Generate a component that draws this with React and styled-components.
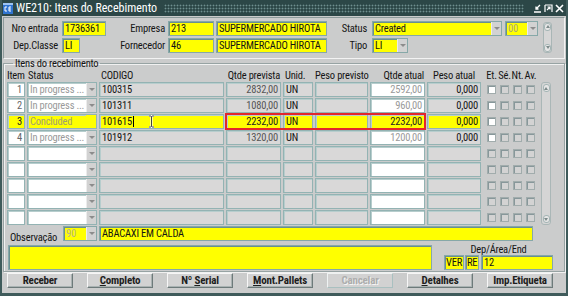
import React from "react";
import styled, { createGlobalStyle } from "styled-components";

const YELLOW = "#ffff00";
const GRAY = "#d9d8d8";
const WHITE = "#ffffff";
const FONT = `"Roboto Condensed", "Liberation Sans", Arial, sans-serif`;

const GlobalStyle = createGlobalStyle`
  * { box-sizing: border-box; }
  html, body { margin: 0; padding: 0; background: #c8caca; }
  body {
    font-family: ${FONT};
    font-size: 10.5px;
    letter-spacing: -0.2px;
    color: #151515;
  }
`;

const Window = styled.div`
  width: 568px;
  height: 296px;
  display: flex;
  flex-direction: column;
  background: #cbcccc;
  border: 2px solid #3f5b5b;
  border-top: none;
  border-bottom-width: 3px;
  overflow: hidden;
`;

const TitleBar = styled.div`
  height: 16px;
  flex: none;
  display: flex;
  align-items: center;
  gap: 3px;
  padding: 0 2px 0 1px;
  background: #2c4747;
  color: #fff;
  font-size: 12px;
  letter-spacing: 0;
`;

const Dots = styled.span`
  flex: 1;
  height: 9px;
  margin: 0 6px 0 4px;
  background-image: radial-gradient(circle, #6f8f8f 0.8px, transparent 1.1px);
  background-size: 3px 3px;
`;

const Controls = styled.div`
  display: flex;
  gap: 2px;
`;

const HeaderPanel = styled.div`
  flex: none;
  margin: 1px 1px 0;
  height: 42px;
  padding-top: 3px;
  border: 1px solid #8d9b9b;
  border-right-color: #f3f3f3;
  border-bottom-color: #f3f3f3;
  display: grid;
  grid-template-columns: 58px 44px 62px 46px 113px 45px 130px 36px 14px;
  grid-template-rows: 15px 15px;
  row-gap: 2px;
  align-items: center;
`;

const Label = styled.span`
  text-align: right;
  padding-right: ${(p) => p.$pr ?? 4}px;
  white-space: nowrap;
  line-height: 15px;
`;

const Field = styled.div`
  height: 15px;
  width: ${(p) => (p.$w ? `${p.$w}px` : "auto")};
  margin-left: ${(p) => p.$ml || 0}px;
  display: flex;
  align-items: center;
  justify-content: ${(p) => (p.$right ? "flex-end" : "flex-start")};
  padding: 0 ${(p) => p.$pad ?? 2}px;
  background: ${(p) => p.$bg || YELLOW};
  color: ${(p) => p.$tone || "#141414"};
  border: 1px solid #86a8a8;
  box-shadow: inset 1px 1px 0 #6a8f8f;
  white-space: nowrap;
  overflow: hidden;
  min-width: 0;
`;

const Cell = styled(Field)`
  border-color: #93b3b3;
  box-shadow: inset 1px 1px 0 #b7cdcd;
`;

const ComboText = styled.span`
  flex: 1;
  padding: 0 2px;
  overflow: hidden;
`;

const DropBtn = styled.span`
  width: 10px;
  align-self: stretch;
  flex: none;
  display: flex;
  align-items: center;
  justify-content: center;
  background: ${(p) => p.$bg || "#d2d2d2"};
  border-left: 1px solid ${(p) => (p.$bg ? p.$bg : "#ececec")};
  &::after {
    content: "";
    border-left: 3px solid transparent;
    border-right: 3px solid transparent;
    border-top: 3px solid ${(p) => (p.$bg ? "transparent" : "#8c8c8c")};
  }
`;

const MiniScroll = styled.div`
  grid-column: 9;
  grid-row: 1 / span 2;
  margin-left: 5px;
  width: 9px;
  height: 31px;
  display: flex;
  flex-direction: column;
  justify-content: space-between;
  align-items: center;
  background: #d6d6d6;
  border: 1px solid #a9b6b6;
  border-radius: 3px;
`;

const ScrollBtn = styled.span`
  width: 7px;
  height: 8px;
  display: flex;
  align-items: center;
  justify-content: center;
  border-radius: 3px;
  background: #e6e6e6;
  border: 1px solid #a4b5b5;
  &::after {
    content: "";
    border-left: 2px solid transparent;
    border-right: 2px solid transparent;
    ${(p) =>
      p.$down ? "border-top: 3px solid #7d8b8b;" : "border-bottom: 3px solid #7d8b8b;"}
  }
`;

const Group = styled.fieldset`
  flex: none;
  margin: 0 1px;
  padding: 0 3px 1px;
  border: 1px solid #97a3a3;
  box-shadow: inset 1px 1px 0 #f1f1f1, 1px 1px 0 #f1f1f1;
  min-width: 0;
`;

const Legend = styled.legend`
  margin-left: 6px;
  padding: 0 2px;
  line-height: 9px;
  font-size: 10.5px;
`;

const ItemsGrid = styled.div`
  display: grid;
  grid-template-columns: 18px 70px 125px 199px 54px 56px 10px;
  grid-template-rows: 13px repeat(9, 15px);
  column-gap: 2px;
  row-gap: 1px;
`;

const Head = styled.span`
  align-self: end;
  white-space: nowrap;
  line-height: 10px;
  text-align: ${(p) => p.$align || "left"};
  padding: 0 ${(p) => p.$pad || 0}px;
`;

const Quad = styled.div`
  display: grid;
  grid-template-columns: 55px 30px 53px 55px;
  column-gap: 2px;
  outline: ${(p) => (p.$marked ? "2px solid #e3262b" : "none")};
  outline-offset: -1px;
`;

const CheckHeads = styled.div`
  align-self: end;
  display: flex;
  padding-left: 2px;
  line-height: 10px;
  span {
    width: 13px;
    text-align: center;
    white-space: nowrap;
  }
`;

const Checks = styled.div`
  display: flex;
  align-items: center;
  gap: 4px;
  padding-left: 4px;
`;

const Check = styled.span`
  width: 9px;
  height: 9px;
  background: ${(p) => (p.$on ? WHITE : "#d3d3d3")};
  border: 1px solid #a1acac;
  box-shadow: inset 1px 1px 0 #87979a;
`;

const VScroll = styled.div`
  grid-column: 7;
  grid-row: 2 / span 9;
  display: flex;
  flex-direction: column;
  justify-content: space-between;
  align-items: center;
  padding: 1px 0;
  background: #d5d5d5;
  border: 1px solid #aab7b7;
  border-radius: 3px;
`;

const Caret = styled.span`
  width: 1px;
  height: 11px;
  background: #000;
  margin-left: 1px;
`;

const ObsRow = styled.div`
  display: flex;
  align-items: flex-start;
  height: 15px;
  margin-top: 1px;
`;

const ObsLabel = styled.span`
  width: 56px;
  flex: none;
  padding: 6px 0 0 3px;
  line-height: 11px;
  white-space: nowrap;
`;

const BottomRow = styled.div`
  display: flex;
  align-items: flex-start;
  margin-top: 4px;
`;

const Notes = styled.div`
  width: 424px;
  height: 25px;
  margin-left: 1px;
  background: ${YELLOW};
  border: 1px solid #86a8a8;
  box-shadow: inset 1px 1px 0 #6a8f8f;
`;

const DepBox = styled.div`
  width: 109px;
  margin-left: 12px;
  display: flex;
  flex-direction: column;
  align-items: center;
`;

const DepLabel = styled.span`
  line-height: 10px;
  height: 10px;
  white-space: nowrap;
`;

const DepFields = styled.div`
  display: flex;
  width: 100%;
`;

const ButtonBar = styled.div`
  flex: none;
  display: flex;
  justify-content: space-between;
  margin-top: 1px;
  padding: 0 13px 0 5px;
`;

const Button = styled.button`
  width: 66px;
  height: 15px;
  padding: 0;
  font-family: ${FONT};
  font-size: 11px;
  font-weight: bold;
  letter-spacing: -0.2px;
  line-height: 13px;
  color: #1e1e1e;
  background: #d2d2d2;
  border: 1px solid;
  border-color: #f6f6f6 #6d7a7a #6d7a7a #f6f6f6;
  box-shadow: inset -1px -1px 0 #a9b2b2;
  u {
    text-decoration: underline;
  }
  &:disabled {
    color: #adadad;
    text-shadow: 1px 1px 0 #f4f4f4;
    border-color: #eef2f2 #a9c0c0 #a9c0c0 #eef2f2;
    box-shadow: none;
  }
`;

const FormIcon = () => (
  <svg width="10" height="11" viewBox="0 0 10 11">
    <rect x="0" y="0" width="10" height="11" fill="#2f74d0" />
    <rect x="0" y="0" width="10" height="2" fill="#9cc3f2" />
    <path d="M2 4h2M2 4v4h2M6 4h2M6 4v4h2M6 6h2" stroke="#fff" strokeWidth="1" fill="none" />
  </svg>
);

const MinIcon = () => (
  <svg width="9" height="9" viewBox="0 0 9 9">
    <path d="M1 8h7M7 1L3 5M3 2.5V5h2.5" stroke="#fff" strokeWidth="1.3" fill="none" />
  </svg>
);

const RestoreIcon = () => (
  <svg width="9" height="9" viewBox="0 0 9 9">
    <path d="M1 1h7v7M1 1v7M3 6l3-3M3.5 3H6v2.5" stroke="#fff" strokeWidth="1.2" fill="none" />
  </svg>
);

const CloseIcon = () => (
  <svg width="9" height="9" viewBox="0 0 9 9">
    <path d="M1 1l7 7M8 1L1 8" stroke="#fff" strokeWidth="1.6" />
  </svg>
);

const IBeam = () => (
  <svg width="7" height="13" viewBox="0 0 7 13" style={{ marginLeft: 14 }}>
    <path d="M1 1h2l.5.5.5-.5h2M3.5 1.5v10M1 12h2l.5-.5.5.5h2" stroke="#fff" strokeWidth="2.2" fill="none" />
    <path d="M1 1h2l.5.5.5-.5h2M3.5 1.5v10M1 12h2l.5-.5.5.5h2" stroke="#444" strokeWidth="1" fill="none" />
  </svg>
);

const MUTED = "#9a9a9a";

const rows = [
  { item: "1", status: "In progress ...", code: "100315", prev: "2832,00", unid: "UN", atual: "2592,00", peso: "0,000" },
  { item: "2", status: "In progress ...", code: "101311", prev: "1080,00", unid: "UN", atual: "960,00", peso: "0,000" },
  { item: "3", status: "Concluded", code: "101615", prev: "2232,00", unid: "UN", atual: "2232,00", peso: "0,000", current: true },
  { item: "4", status: "In progress ...", code: "101912", prev: "1320,00", unid: "UN", atual: "1200,00", peso: "0,000" },
  {}, {}, {}, {}, {},
];

function ItemRow({ row }) {
  const cur = row.current;
  const white = cur ? YELLOW : WHITE;
  const gray = cur ? YELLOW : GRAY;
  const filled = Boolean(row.item);
  return (
    <>
      <Cell $bg={white} $right $tone={cur ? "#222" : "#666"}>{row.item}</Cell>
      <Cell $bg={white} $pad={0} $tone={cur ? "#a0a070" : MUTED}>
        <ComboText>{row.status}</ComboText>
        <DropBtn $bg={cur ? YELLOW : undefined} />
      </Cell>
      <Cell $bg={gray}>
        {row.code}
        {cur && (
          <>
            <Caret />
            <IBeam />
          </>
        )}
      </Cell>
      <Quad $marked={cur}>
        <Cell $bg={gray} $right $tone={cur ? "#222" : "#555"}>{row.prev}</Cell>
        <Cell $bg={gray}>{row.unid}</Cell>
        <Cell $bg={gray} />
        <Cell $bg={white} $right $tone={cur ? "#222" : MUTED}>{row.atual}</Cell>
      </Quad>
      <Cell $bg={gray} $right>{row.peso}</Cell>
      <Checks>
        <Check $on={filled} />
        <Check />
        <Check />
        <Check />
      </Checks>
    </>
  );
}

export default function App() {
  return (
    <>
      <GlobalStyle />
      <Window>
        <TitleBar>
          <FormIcon />
          <span>WE210: Itens do Recebimento</span>
          <Dots />
          <Controls>
            <MinIcon />
            <RestoreIcon />
            <CloseIcon />
          </Controls>
        </TitleBar>

        <HeaderPanel>
          <Label>Nro entrada</Label>
          <Field>1736361</Field>
          <Label $pr={3}>Empresa</Label>
          <Field>213</Field>
          <Field $ml={2}>SUPERMERCADO HIROTA</Field>
          <Label $pr={5}>Status</Label>
          <Field $pad={0}>
            <ComboText>Created</ComboText>
            <DropBtn />
          </Field>
          <Field $ml={3} $pad={0} $tone="#a8a880">
            <ComboText>00</ComboText>
            <DropBtn />
          </Field>
          <MiniScroll>
            <ScrollBtn />
            <ScrollBtn $down />
          </MiniScroll>

          <Label>Dep.Classe</Label>
          <Field $w={18}>LI</Field>
          <Label $pr={3}>Fornecedor</Label>
          <Field>46</Field>
          <Field $ml={2}>SUPERMERCADO HIROTA</Field>
          <Label $pr={5}>Tipo</Label>
          <Field $w={36} $pad={0}>
            <ComboText>LI</ComboText>
            <DropBtn />
          </Field>
        </HeaderPanel>

        <Group>
          <Legend>Itens do recebimento</Legend>
          <ItemsGrid>
            <Head>Item</Head>
            <Head $pad={1}>Status</Head>
            <Head $pad={2}>CODIGO</Head>
            <Quad>
              <Head $align="right" $pad={1}>Qtde prevista</Head>
              <Head $pad={2}>Unid.</Head>
              <Head $align="center">Peso previsto</Head>
              <Head $align="right" $pad={1}>Qtde atual</Head>
            </Quad>
            <Head $align="center">Peso atual</Head>
            <CheckHeads>
              <span>Et.</span>
              <span>Sé.</span>
              <span>Nt.</span>
              <span>Av.</span>
            </CheckHeads>
            <span />
            <VScroll>
              <ScrollBtn />
              <ScrollBtn $down />
            </VScroll>
            {rows.map((row, i) => (
              <ItemRow key={i} row={row} />
            ))}
          </ItemsGrid>

          <ObsRow>
            <ObsLabel>Observação</ObsLabel>
            <Field $w={34} $pad={0} $tone="#b4b48a">
              <ComboText>90</ComboText>
              <DropBtn />
            </Field>
            <Field $w={434} $ml={2}>ABACAXI EM CALDA</Field>
          </ObsRow>

          <BottomRow>
            <Notes />
            <DepBox>
              <DepLabel>Dep/Área/End</DepLabel>
              <DepFields>
                <Field $w={20} $pad={1}>VER</Field>
                <Field $w={14} $ml={1} $pad={1}>RE</Field>
                <Field $w={72} $ml={2}>12</Field>
              </DepFields>
            </DepBox>
          </BottomRow>
        </Group>

        <ButtonBar>
          <Button>Receber</Button>
          <Button><u>C</u>ompleto</Button>
          <Button>Nº <u>S</u>erial</Button>
          <Button><u>M</u>ont.Pallets</Button>
          <Button disabled>Cancelar</Button>
          <Button><u>D</u>etalhes</Button>
          <Button>Imp.Etiqueta</Button>
        </ButtonBar>
      </Window>
    </>
  );
}
